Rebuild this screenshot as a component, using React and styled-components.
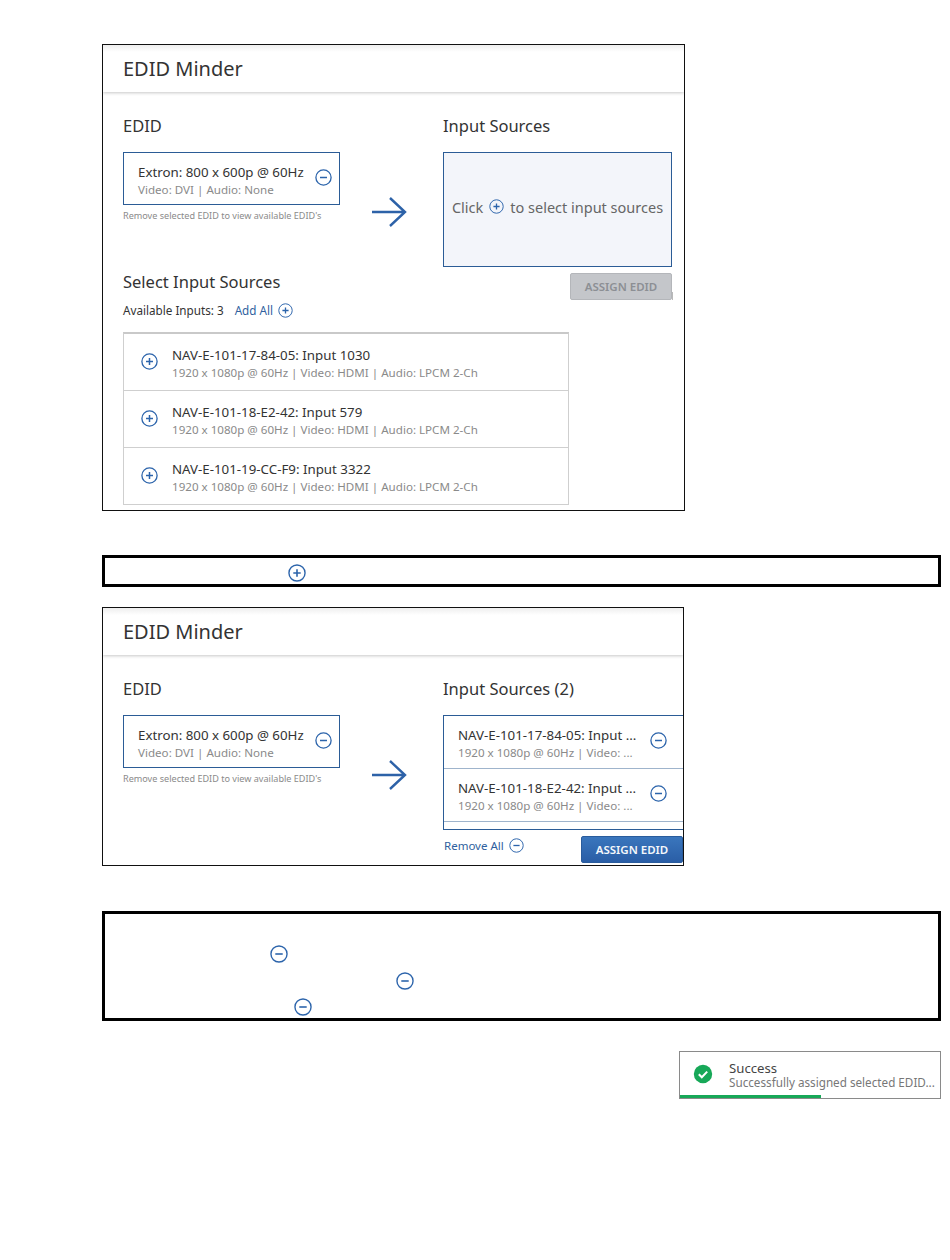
import React from 'react'
import styled, {createGlobalStyle} from 'styled-components'

const Global = createGlobalStyle`
    html, body {
        margin: 0;
        background: white;
        font-family: 'Noto Sans', 'Open Sans', sans-serif;
        color: #333;
    }
    * {
        box-sizing: border-box;
    }
`

const Page = styled.div`
    display: flex;
    flex-direction: column;
    align-items: flex-start;
    width: 950px;
    min-height: 1260px;
    padding: 44px 9px 0 102px;
`

const Panel = styled.section`
    width: ${p => p.$width}px;
    height: ${p => p.$height}px;
    margin-top: ${p => p.$top || 0}px;
    border: 1px solid #111;
    overflow: hidden;
    background: white;
`

const Header = styled.header`
    height: 47px;
    padding: 10px 20px 0;
    font-size: 20px;
    line-height: 27px;
    color: #333;
    background: linear-gradient(#eeeeee, #ffffff 7px);
    box-shadow: 0 1px 3px rgba(0, 0, 0, 0.22);
`

const Top = styled.div`
    display: flex;
    padding: 23px 0 0 20px;
`

const EdidColumn = styled.div`
    width: 217px;
    flex: none;
`

const Heading = styled.h2`
    margin: 0;
    font-size: 16.5px;
    font-weight: 400;
    line-height: 22px;
    color: #333;
`

const EdidBox = styled.div`
    display: flex;
    align-items: center;
    justify-content: space-between;
    height: 53px;
    margin-top: 15px;
    padding: 0 7px 2px 14px;
    border: 1px solid #2b5c96;
`

const Info = styled.div`
    min-width: 0;
    padding-top: ${p => p.$top || 6}px;
`

const Name = styled.div`
    font-size: 13.3px;
    line-height: 18px;
    color: #333;
    white-space: nowrap;
`

const Detail = styled.div`
    font-size: 11.6px;
    line-height: 17px;
    color: #8a8a8a;
    white-space: nowrap;
`

const Caption = styled.div`
    margin-top: 5px;
    font-size: 9.1px;
    line-height: 12px;
    color: #8a8a8a;
    white-space: nowrap;
`

const ArrowColumn = styled.div`
    display: flex;
    justify-content: center;
    width: 103px;
    flex: none;
    padding: 81px 5px 0 0;
`

const SourcesColumn = styled.div`
    width: ${p => p.$width}px;
    flex: none;
`

const EmptyBox = styled.div`
    display: flex;
    align-items: center;
    justify-content: center;
    gap: 6px;
    height: 115px;
    margin-top: 15px;
    padding-bottom: 6px;
    border: 1px solid #2b5c96;
    background: #f3f5fa;
    font-size: 14.5px;
    color: #666;
    white-space: nowrap;
`

const Lower = styled.div`
    display: flex;
    align-items: flex-start;
    padding-left: 20px;
`

const SelectColumn = styled.div`
    width: 446px;
    flex: none;
    padding-top: 4px;
`

const AvailableRow = styled.div`
    display: flex;
    align-items: center;
    height: 18px;
    margin-top: 8px;
    font-size: 11.7px;
    color: #333;
`

const AddAll = styled.span`
    display: inline-flex;
    align-items: center;
    gap: 5px;
    margin-left: 11px;
    color: #2f5f9e;
`

const InputList = styled.div`
    margin-top: 13px;
    border: 1px solid #cfcfcf;
    border-top: 2px solid #c9c9c9;
`

const InputRow = styled.div`
    display: flex;
    align-items: center;
    gap: 14px;
    height: 57px;
    padding: 0 0 2px 17px;
    border-bottom: 1px solid #cfcfcf;

    &:last-child {
        height: 56px;
        border-bottom: none;
    }
`

const AssignButton = styled.button`
    width: 102px;
    height: 27px;
    flex: none;
    margin: ${p => p.$active ? 0 : '6px 0 0 1px'};
    padding: 0;
    border: 1px solid ${p => p.$active ? '#2a5c9c' : '#b4b6ba'};
    border-radius: 2px;
    background: ${p => p.$active ? 'linear-gradient(#3a76bd, #2a5ea6)' : '#c4c6ca'};
    color: ${p => p.$active ? '#f4f7fb' : '#8c8f94'};
    font-family: inherit;
    font-size: 11.5px;
    font-weight: 600;
`

const Tick = styled.span`
    width: 1px;
    height: 8px;
    flex: none;
    margin-top: 25px;
    background: #b9b9b9;
`

const PickedList = styled.div`
    height: 115px;
    margin-top: 15px;
    border: 1px solid #2b5c96;
    border-right: none;
`

const PickedRow = styled.div`
    display: grid;
    grid-template-columns: 186px 17px;
    align-items: center;
    column-gap: 6px;
    height: 53px;
    padding: 0 0 4px 14px;
    border-bottom: 1px solid #9fb4cc;
`

const PickedFooter = styled.div`
    display: flex;
    align-items: flex-start;
    justify-content: space-between;
    margin-top: 6px;
`

const RemoveAll = styled.span`
    display: inline-flex;
    align-items: center;
    gap: 5px;
    height: 19px;
    margin-left: 1px;
    font-size: 11.5px;
    color: #2f5f9e;
`

const Note = styled.div`
    display: flex;
    flex-direction: column;
    gap: 8.5px;
    width: 839px;
    height: ${p => p.$height}px;
    margin-top: ${p => p.$top}px;
    padding-top: ${p => p.$pad}px;
    border: 3px solid #000;
    background: white;
`

const NoteLine = styled.div`
    display: flex;
    height: 18px;
    padding-left: ${p => p.$indent}px;
`

const Toast = styled.div`
    display: flex;
    flex-direction: column;
    align-self: flex-end;
    width: 262px;
    height: 48px;
    margin-top: 30px;
    border: 1px solid #8a8a8a;
`

const ToastBody = styled.div`
    display: flex;
    align-items: center;
    flex: 1;
    gap: 16px;
    padding: 0 0 0 13px;
`

const ToastTitle = styled.div`
    padding-top: 3px;
    font-size: 13.2px;
    line-height: 14px;
    color: #444;
`

const ToastText = styled.div`
    font-size: 11.7px;
    line-height: 14px;
    color: #777;
    white-space: nowrap;
`

const ToastProgress = styled.div`
    height: 3px;
    background: #17a858;
`

const RoundIcon = ({minus, size = 17, stroke = 1.3, color = '#2c64ab'}) => (
    <svg width={size} height={size} viewBox="0 0 17 17" style={{flex: 'none'}}>
        <circle cx="8.5" cy="8.5" r="7.6" fill="none" stroke={color} strokeWidth={stroke} />
        <path d={minus ? 'M5 8.5h7' : 'M5 8.5h7M8.5 5v7'} fill="none" stroke={color} strokeWidth="1.5" />
    </svg>
)

const Arrow = () => (
    <svg width="36" height="32" viewBox="0 0 36 32">
        <path d="M1 16h33M19 2l15 14-15 14" fill="none" stroke="#2d62a8" strokeWidth="2.4" />
    </svg>
)

const Check = () => (
    <svg width="20" height="20" viewBox="0 0 20 20" style={{flex: 'none'}}>
        <circle cx="10" cy="10" r="9.2" fill="#17a858" />
        <path d="M5.8 10.2l3 3 5.4-5.6" fill="none" stroke="white" strokeWidth="2" />
    </svg>
)

const inputs = [
    'NAV-E-101-17-84-05: Input 1030',
    'NAV-E-101-18-E2-42: Input 579',
    'NAV-E-101-19-CC-F9: Input 3322',
]

const picked = [
    'NAV-E-101-17-84-05: Input ...',
    'NAV-E-101-18-E2-42: Input ...',
]

const format = '1920 x 1080p @ 60Hz | Video: HDMI | Audio: LPCM 2-Ch'
const shortFormat = '1920 x 1080p @ 60Hz | Video: ...'

const Edid = () => (
    <EdidColumn>
        <Heading>EDID</Heading>
        <EdidBox>
            <Info>
                <Name>Extron: 800 x 600p @ 60Hz</Name>
                <Detail>Video: DVI | Audio: None</Detail>
            </Info>
            <RoundIcon minus />
        </EdidBox>
        <Caption>Remove selected EDID to view available EDID's</Caption>
    </EdidColumn>
)

const App = () => {
  return (
    <Page>
        <Global />
        <Panel $width={583} $height={467}>
            <Header>EDID Minder</Header>
            <Top>
                <Edid />
                <ArrowColumn><Arrow /></ArrowColumn>
                <SourcesColumn $width={229}>
                    <Heading>Input Sources</Heading>
                    <EmptyBox>
                        Click <RoundIcon size={15} stroke={1.1} /> to select input sources
                    </EmptyBox>
                </SourcesColumn>
            </Top>
            <Lower>
                <SelectColumn>
                    <Heading>Select Input Sources</Heading>
                    <AvailableRow>
                        Available Inputs: 3
                        <AddAll>Add All <RoundIcon size={15} stroke={1.1} /></AddAll>
                    </AvailableRow>
                    <InputList>
                        {inputs.map(name => (
                            <InputRow key={name}>
                                <RoundIcon />
                                <Info $top={4}>
                                    <Name>{name}</Name>
                                    <Detail>{format}</Detail>
                                </Info>
                            </InputRow>
                        ))}
                    </InputList>
                </SelectColumn>
                <AssignButton>ASSIGN EDID</AssignButton>
                <Tick />
            </Lower>
        </Panel>

        <Note $height={32} $top={44} $pad={6}>
            <NoteLine $indent={183}><RoundIcon size={18} /></NoteLine>
        </Note>

        <Panel $width={582} $height={259} $top={20}>
            <Header>EDID Minder</Header>
            <Top>
                <Edid />
                <ArrowColumn><Arrow /></ArrowColumn>
                <SourcesColumn $width={240}>
                    <Heading>Input Sources (2)</Heading>
                    <PickedList>
                        {picked.map(name => (
                            <PickedRow key={name}>
                                <Info>
                                    <Name>{name}</Name>
                                    <Detail>{shortFormat}</Detail>
                                </Info>
                                <RoundIcon minus />
                            </PickedRow>
                        ))}
                    </PickedList>
                    <PickedFooter>
                        <RemoveAll>Remove All <RoundIcon size={15} stroke={1.1} minus /></RemoveAll>
                        <AssignButton $active>ASSIGN EDID</AssignButton>
                    </PickedFooter>
                </SourcesColumn>
            </Top>
        </Panel>

        <Note $height={110} $top={45} $pad={31}>
            <NoteLine $indent={165}><RoundIcon size={18} minus /></NoteLine>
            <NoteLine $indent={291}><RoundIcon size={18} minus /></NoteLine>
            <NoteLine $indent={189}><RoundIcon size={18} minus /></NoteLine>
        </Note>

        <Toast>
            <ToastBody>
                <Check />
                <div>
                    <ToastTitle>Success</ToastTitle>
                    <ToastText>Successfully assigned selected EDID...</ToastText>
                </div>
            </ToastBody>
            <ToastProgress style={{width: `${(141 / 260) * 100}%`}} />
        </Toast>
    </Page>
  )
}

export default App
